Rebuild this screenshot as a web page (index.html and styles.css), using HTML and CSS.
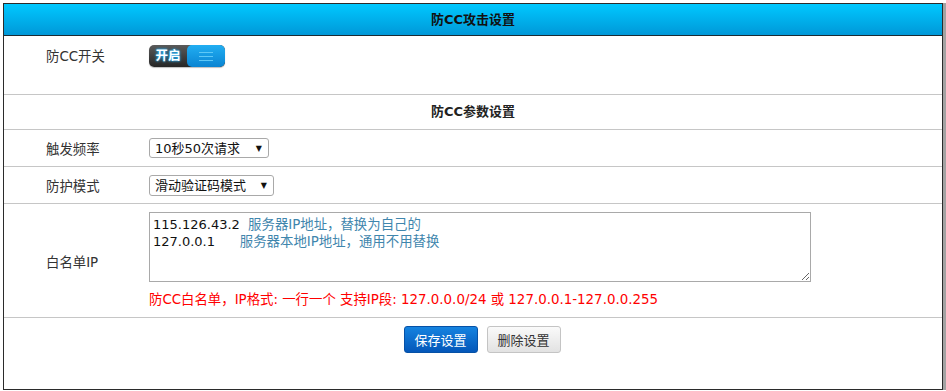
FILE: index.html
```html
<!DOCTYPE html>
<html lang="zh-CN">
<head>
    <meta charset="UTF-8">
    <title>防CC攻击设置</title>
    <link rel="stylesheet" href="styles.css">
</head>
<body>
    <div class="panel">
        <div class="panel-title">防CC攻击设置</div>

        <div class="row row-switch">
            <div class="label">防CC开关</div>
            <div class="field">
                <span class="switch">
                    <span class="switch-on">开启</span>
                    <span class="switch-knob">
                        <svg width="14" height="10" viewBox="0 0 14 10">
                            <path d="M0 1.5H14M0 5.5H14M0 9.5H14" stroke="#5ec8f7" stroke-width="1"/>
                        </svg>
                    </span>
                </span>
            </div>
        </div>

        <div class="subtitle">防CC参数设置</div>

        <div class="row">
            <div class="label">触发频率</div>
            <div class="field">
                <span class="select select-rate">
                    <select name="cc_rate">
                        <option>10秒50次请求</option>
                        <option>10秒100次请求</option>
                        <option>10秒200次请求</option>
                    </select>
                </span>
            </div>
        </div>

        <div class="row">
            <div class="label">防护模式</div>
            <div class="field">
                <span class="select select-mode">
                    <select name="cc_mode">
                        <option>滑动验证码模式</option>
                        <option>跳转验证模式</option>
                        <option>直接拦截模式</option>
                    </select>
                </span>
            </div>
        </div>

        <div class="row row-white">
            <div class="label">白名单IP</div>
            <div class="field">
                <div class="ip-box" contenteditable="true"><div><span class="ip">115.126.43.2</span>  <span class="note">服务器IP地址，替换为自己的</span></div><div><span class="ip">127.0.0.1</span>      <span class="note">服务器本地IP地址，通用不用替换</span></div></div>
                <p class="tip">防CC白名单，IP格式: 一行一个 支持IP段: 127.0.0.0/24 或 127.0.0.1-127.0.0.255</p>
            </div>
        </div>

        <div class="actions">
            <button type="button" class="btn btn-save">保存设置</button>
            <button type="button" class="btn btn-delete">删除设置</button>
        </div>
    </div>
</body>
</html>
```

FILE: styles.css
```css
body {
    margin: 0;
    padding: 3px 3px 0 3px;
    font-family: "DejaVu Sans", "Noto Sans CJK SC", sans-serif;
    font-size: 13px;
    color: #333;
    background: #fff;
}
.panel {
    width: 938px;
    border: 1px solid #2b2b2b;
    box-shadow: 3px 0 0 #a3a3a3;
}
.panel-title {
    height: 31px;
    line-height: 31px;
    text-align: center;
    font-weight: bold;
    color: #111;
    background: linear-gradient(#00c8ff, #0098d8);
    border-bottom: 1px solid #1b2b33;
}
.row {
    display: flex;
    align-items: center;
    height: 36px;
    border-bottom: 1px solid #c6c6c6;
}
.label {
    width: 103px;
    padding-left: 42px;
    flex-shrink: 0;
    font-size: 13.4px;
}
.field {
    flex: 1;
}
.row-switch {
    height: 49px;
    padding-top: 9px;
    align-items: flex-start;
}
.row-switch .label {
    line-height: 23px;
}
.switch {
    display: inline-flex;
    width: 76px;
    height: 22px;
    border-radius: 5px;
    overflow: hidden;
    background: linear-gradient(#5a5a5a, #262626);
    box-shadow: 0 1px 1px rgba(0, 0, 0, 0.25);
    vertical-align: top;
}
.switch-on {
    width: 38px;
    line-height: 22px;
    text-align: center;
    color: #fff;
    font-weight: bold;
    font-size: 12.5px;
    text-shadow: 0 0 3px #1fb2ff, 0 0 2px #1fb2ff;
}
.switch-knob {
    flex: 1;
    display: flex;
    align-items: center;
    justify-content: center;
    border-radius: 5px;
    background: linear-gradient(#21aef2, #0a84d2);
}
.subtitle {
    height: 34px;
    line-height: 34px;
    text-align: center;
    font-weight: bold;
    color: #222;
    border-bottom: 1px solid #c6c6c6;
}
.select {
    position: relative;
    display: inline-block;
    vertical-align: middle;
}
.select select {
    appearance: none;
    -webkit-appearance: none;
    height: 20px;
    padding: 0 0 0 5px;
    font-family: inherit;
    font-size: 13px;
    color: #111;
    background: #fff;
    border: 1px solid #a9a9a9;
    border-radius: 3px;
}
.select-rate select {
    width: 120px;
}
.select-mode select {
    width: 125px;
    height: 21px;
}
.select::after {
    content: "▼";
    position: absolute;
    right: 7px;
    top: 50%;
    transform: translateY(-50%);
    font-size: 8px;
    color: #111;
    pointer-events: none;
}
.row-white {
    height: 113px;
    align-items: flex-start;
}
.row-white .label {
    align-self: center;
}
.ip-box {
    width: 654px;
    height: 62px;
    margin-top: 8px;
    padding: 3px;
    border: 1px solid #a9a9a9;
    line-height: 17px;
    white-space: pre;
    color: #111;
    overflow: auto;
    resize: both;
    outline: none;
}
.note {
    color: #3f86ad;
    font-size: 13.4px;
}
.tip {
    margin: 9px 0 0 0;
    line-height: 18px;
    font-size: 13.4px;
    color: #f00;
}
.actions {
    display: flex;
    justify-content: center;
    gap: 9px;
    height: 63px;
    padding: 8px 0 0 18px;
}
.btn {
    width: 74px;
    height: 27px;
    font-family: inherit;
    font-size: 13px;
    border-radius: 3px;
    cursor: pointer;
}
.btn-save {
    color: #fff;
    background: linear-gradient(#1583e0, #0457b9);
    border: 1px solid #0651a6;
}
.btn-delete {
    color: #333;
    background: linear-gradient(#fafafa, #e2e2e2);
    border: 1px solid #c4c4c4;
}
```
